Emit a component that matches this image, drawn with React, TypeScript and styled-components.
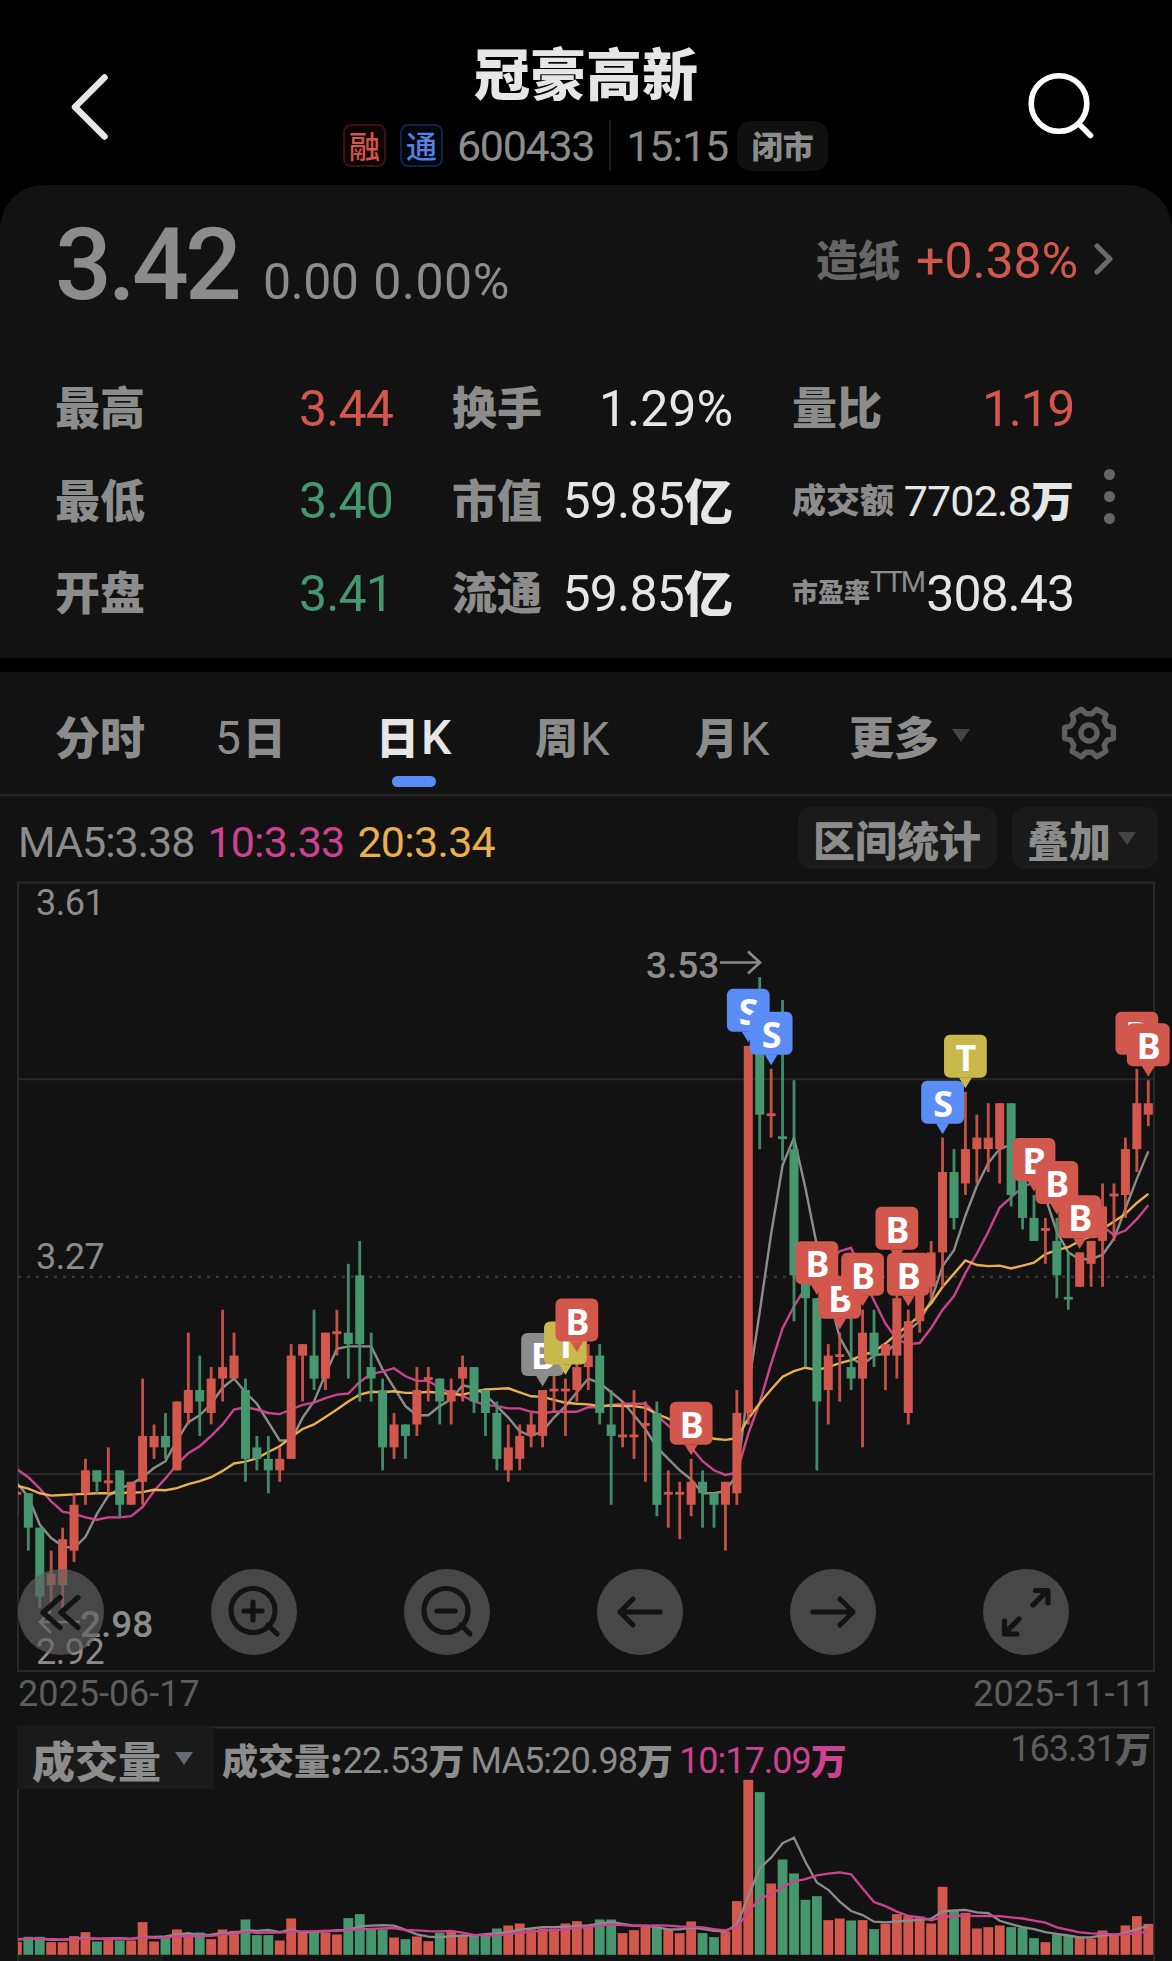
import React from 'react';
import styled, { createGlobalStyle } from 'styled-components';

const RED = '#d2574d';
const GREEN = '#469670';
const BLUE = '#5b8df6';
const GOLD = '#c9b84c';
const GREY = '#8c8c8c';
const DIM = '#5e5e5e';
const PINK = '#cc4490';
const AMBER = '#e9b04d';
const LIGHT = '#e6e6e6';
const PANEL = '#121212';
const CHIP = '#1a1a1a';
const LINE = '#282828';

const GlobalStyle = createGlobalStyle`
  * { box-sizing: border-box; }
  body { margin: 0; background: #000; }
`;

const Page = styled.div`
  width: 1172px;
  height: 1961px;
  overflow: hidden;
  display: flex;
  flex-direction: column;
  background: #000;
  font-family: Roboto, 'Noto Sans CJK SC', sans-serif;
  color: ${GREY};
`;

const Num = styled.span<{ $size?: number; $color?: string; $ls?: number; $weight?: number }>`
  font-family: Roboto, sans-serif;
  font-size: ${p => p.$size ?? 50}px;
  line-height: 1;
  padding-top: 0.06em;
  font-weight: ${p => p.$weight ?? 400};
  letter-spacing: ${p => p.$ls ?? 0}px;
  color: ${p => p.$color ?? GREY};
  white-space: nowrap;
`;

const Han = styled.span<{ $size?: number; $color?: string; $weight?: number }>`
  font-family: 'Noto Sans CJK SC', sans-serif;
  font-size: ${p => p.$size ?? 45}px;
  line-height: 1;
  font-weight: ${p => p.$weight ?? 900};
  color: ${p => p.$color ?? GREY};
  margin-top: -0.07em;
  white-space: nowrap;
`;

/* header */
const Header = styled.header`
  height: 185px;
  flex: none;
  display: grid;
  grid-template-columns: 180px 1fr 180px;
`;
const IconSlot = styled.div<{ $right?: boolean }>`
  display: flex;
  padding-top: 70px;
  padding-left: ${p => (p.$right ? 31 : 66)}px;
`;
const HeaderMid = styled.div`
  display: flex;
  flex-direction: column;
  align-items: center;
`;
const TitleLine = styled.div`
  height: 120px;
  padding-top: 26px;
  display: flex;
  align-items: center;
`;
const MetaLine = styled.div`
  width: 812px;
  height: 51px;
  padding-left: 163px;
  display: flex;
  align-items: center;
`;
const Tag = styled.span<{ $edge: string; $bg: string }>`
  width: 43px;
  height: 43px;
  margin-right: 14px;
  display: flex;
  align-items: center;
  justify-content: center;
  border: 2px solid ${p => p.$edge};
  border-radius: 8px;
  background: ${p => p.$bg};
`;
const Divider = styled.i`
  width: 2px;
  height: 51px;
  margin: 0 15px 0 15px;
  background: #1c1c1c;
`;
const StatusChip = styled.span`
  width: 91px;
  height: 50px;
  margin-left: 9px;
  display: flex;
  align-items: center;
  justify-content: center;
  border-radius: 14px;
  background: #101010;
`;

/* quote card */
const Quote = styled.section`
  height: 473px;
  flex: none;
  margin-bottom: 14px;
  border-radius: 44px 44px 0 0;
  background: ${PANEL};
`;
const PriceLine = styled.div`
  height: 176px;
  padding: 0 58px 0 55px;
  display: flex;
  justify-content: space-between;
`;
const PriceSet = styled.div`
  display: flex;
  align-items: baseline;
  padding-top: 24px;
`;
const Change = styled.span`
  display: flex;
  gap: 15px;
  margin-left: 25px;
`;
const Sector = styled.div`
  height: 50px;
  margin-top: 49px;
  display: flex;
  align-items: center;
  gap: 16px;
`;
const StatArea = styled.div`
  display: flex;
`;
const Stats = styled.div`
  width: 1075px;
  padding-left: 55px;
  display: grid;
  grid-template-columns: 338px 281px 282px;
  column-gap: 59px;
  grid-auto-rows: 92.5px;
`;
const Stat = styled.div`
  display: flex;
  align-items: center;
  justify-content: space-between;
`;
const Value = styled.span`
  display: flex;
  align-items: center;
`;
const Sup = styled(Num)`
  margin-top: -22px;
`;
const Dots = styled.div`
  width: 68px;
  padding-top: 108px;
  display: flex;
  flex-direction: column;
  align-items: center;
  gap: 11px;
  i { width: 11px; height: 11px; border-radius: 50%; background: #656565; }
`;

/* chart panel */
const Panel = styled.section`
  flex: 1;
  background: ${PANEL};
`;
const Tabs = styled.nav`
  height: 124px;
  padding: 0 55px 0 55px;
  border-bottom: 2px solid #242424;
  display: grid;
  grid-template-columns: 160px 161px 159px 160px 154px 160px 1fr;
`;
const Tab = styled.div`
  height: 122px;
  display: flex;
  flex-direction: column;
  padding-top: 38px;
`;
const TabText = styled.div`
  height: 54px;
  display: flex;
  align-items: center;
  gap: 2px;
`;
const TabMark = styled.i`
  width: 44px;
  height: 11px;
  margin: 12px 0 0 16px;
  border-radius: 6px;
  background: ${BLUE};
`;
const Caret = styled.i<{ $color?: string; $ml?: number }>`
  width: 0;
  height: 0;
  margin: 0 0 4px ${p => p.$ml ?? 8}px;
  border: 9px solid transparent;
  border-top: 13px solid ${p => p.$color ?? '#444'};
  border-bottom: 0;
`;
const GearSlot = styled.div`
  display: flex;
  justify-content: flex-end;
  padding-top: 33px;
`;
const Toolbar = styled.div`
  height: 86px;
  padding: 0 14px 0 18px;
  display: flex;
  justify-content: space-between;
`;
const Legend = styled.div`
  display: flex;
  align-items: center;
  gap: 13px;
  padding-top: 4px;
`;
const Actions = styled.div`
  display: flex;
  gap: 15px;
  padding-top: 11px;
`;
const Action = styled.div<{ $w: number }>`
  width: ${p => p.$w}px;
  height: 62px;
  padding: 4px 0 0 15px;
  display: flex;
  align-items: center;
  border-radius: 14px;
  background: ${CHIP};
`;
const ChartBox = styled.div<{ $h: number }>`
  position: relative;
  height: ${p => p.$h}px;
  margin: 0 17px;
  svg { display: block; overflow: visible; }
`;
const Controls = styled.div`
  position: absolute;
  left: 1px;
  right: 86px;
  top: 687px;
  display: flex;
  justify-content: space-between;
`;
const RoundButton = styled.button`
  width: 86px;
  height: 86px;
  padding: 0;
  border: 0;
  border-radius: 50%;
  background: rgba(97, 97, 97, 0.68);
`;
const Dates = styled.div`
  height: 56px;
  padding: 0 17px 13px 18px;
  display: flex;
  align-items: center;
  justify-content: space-between;
`;
const VolumeHead = styled.div`
  position: absolute;
  inset: 0 0 auto 0;
  height: 63px;
  display: flex;
  align-items: flex-start;
`;
const Picker = styled.div`
  width: 197px;
  height: 62px;
  padding: 5px 0 0 15px;
  display: flex;
  align-items: center;
  background: ${CHIP};
`;
const VolumeLegend = styled.div`
  height: 66px;
  flex: 1;
  padding-left: 8px;
  display: flex;
  align-items: center;
  gap: 6px;
`;
const VolumeMax = styled.div`
  height: 42px;
  padding-right: 4px;
  display: flex;
  align-items: center;
`;
const NextIndicator = styled.div`
  width: 145px;
  height: 6px;
  margin-left: 18px;
  background: ${CHIP};
`;

/* one row per day: up(1)/down(0), high, body top, body bottom, low — in cents above 2.98 — and volume */
type Candle = [number, number, number, number, number, number];
const DATA: Candle[] = [
  [1,10,10,10,8,39],[0,10,10,7,5,54],[0,7,7,1,0,54],[1,5,3,2,0,38],[1,7,6,2,0,38],
  [1,10,9,5,4,56],[1,13,12,10,9,68],[0,12,12,11,10,40],[1,14,11,11,10,44],[0,12,12,9,8,43],
  [1,11,11,9,9,43],[1,20,15,11,9,98],[1,16,15,14,13,40],[0,17,15,14,13,50],[1,18,18,12,12,76],
  [1,24,19,17,16,62],[0,22,19,18,15,67],[1,21,20,17,16,47],[1,26,21,20,18,76],[1,24,22,20,20,72],
  [0,20,19,13,11,106],[0,15,14,13,12,59],[0,15,13,12,10,59],[1,14,13,12,11,43],[1,23,22,13,13,109],
  [1,23,23,22,18,66],[0,26,22,20,19,66],[1,24,24,20,19,67],[1,26,24,24,22,61],[0,30,24,23,20,110],
  [0,32,29,23,18,122],[0,24,21,20,18,76],[0,20,19,14,12,76],[1,17,16,14,13,52],[0,16,16,15,13,47],
  [1,21,19,16,15,55],[1,21,20,20,18,41],[0,20,20,18,16,66],[1,20,19,18,16,72],[1,22,21,20,18,56],
  [0,21,21,18,17,58],[0,19,19,17,15,58],[0,18,17,13,12,79],[1,16,14,12,11,88],[1,16,15,13,12,94],
  [1,17,16,15,14,76],[1,19,19,15,14,79],[1,21,19,19,17,79],[1,20,19,19,15,94],[1,22,21,19,18,101],
  [1,23,22,21,19,87],[0,23,22,17,16,106],[0,19,16,15,9,106],[1,18,15,15,14,65],[1,19,15,15,13,74],
  [1,18,16,16,11,86],[0,18,17,9,8,82],[1,12,10,10,7,76],[1,11,10,10,6,65],[1,13,11,9,8,100],
  [0,12,11,10,7,65],[0,10,10,9,7,53],[1,11,11,9,5,70],[1,19,17,10,9,161],[1,49,49,17,16,525],
  [0,55,50,43,40,488],[1,47,43,43,41,214],[0,53,41,41,39,286],[0,46,40,29,25,244],[0,29,29,27,21,165],
  [0,27,27,18,12,176],[1,23,22,19,16,104],[1,24,22,22,18,109],[0,26,21,20,19,103],[1,26,24,20,14,104],
  [0,26,24,22,21,77],[1,23,23,22,19,93],[1,30,27,22,20,122],[1,26,25,17,16,117],[1,28,28,25,24,115],
  [1,32,31,28,27,94],[1,41,38,31,28,204],[0,40,38,34,33,134],[1,45,40,37,36,126],[1,43,41,40,37,79],
  [1,44,41,40,38,83],[1,44,44,40,37,88],[0,44,44,36,35,83],[0,38,38,34,33,82],[0,36,34,32,32,50],
  [1,34,33,33,30,38],[0,34,32,29,27,61],[0,31,27,27,26,58],[1,31,31,28,28,54],[1,32,32,30,28,48],
  [1,37,35,32,28,73],[1,37,36,36,32,63],[1,41,40,36,34,88],[1,47,44,40,38,116],[1,46,44,43,42,93],
];

const UNIT = 11.472;
const cx = (i: number) => 16.9 + i * 11.428;
const py = (k: number) => 1608 - k * UNIT;
const vy = (v: number) => 1954.8 - v / 3;
const closes = DATA.map(d => (d[0] ? d[2] : d[3]));
const volumes = DATA.map(d => d[5]);

/* moving average; `lead` holds the values that depend on days before the window */
const average = (series: number[], n: number, lead: number[]) =>
  series.map((_, i) =>
    i < n - 1 ? lead[i] : series.slice(i - n + 1, i + 1).reduce((a, b) => a + b, 0) / n,
  );
const ma5 = average(closes, 5, [10.9, 9.7, 7.25, 6.1]);
const ma10 = average(closes, 10, [12.1, 11.4, 10.4, 9.3, 8.4, 8.2, 7.9, 7.7, 7.9]);
const ma20 = average(closes, 20, [
  10.65, 10.4, 10, 9.8, 9.85, 9.9, 9.95, 10, 10, 10.05, 10.05, 10.1, 10.3, 10.27, 10.45, 10.8, 11.05, 11.4, 11.95,
]);
const vma5 = average(volumes, 5, [45, 48, 48, 45]);
const vma10 = average(volumes, 10, [48, 48, 48, 47, 46, 47, 48, 49, 48]);
const path = (values: number[], y: (n: number) => number) =>
  values.map((v, i) => `${i ? 'L' : 'M'}${cx(i).toFixed(1)} ${y(v).toFixed(1)}`).join('');

const MARKS: [number, string, string][] = [
  [46, 'B', GREY], [48, 'T', GOLD], [49, 'B', RED], [59, 'B', RED], [64, 'S', BLUE], [66, 'S', BLUE],
  [70, 'B', RED], [72, 'B', RED], [74, 'B', RED], [77, 'B', RED], [78, 'B', RED], [81, 'S', BLUE],
  [83, 'T', GOLD], [89, 'B', RED], [91, 'B', RED], [93, 'B', RED], [98, 'B', RED], [99, 'B', RED],
];

const AxisText = styled.text`
  font: 400 36px Roboto, sans-serif;
  letter-spacing: -0.5px;
  fill: ${GREY};
`;
const ExtremeText = styled.text`
  font: 500 37px Roboto, sans-serif;
  fill: ${GREY};
`;
const MarkText = styled.text`
  font: 700 36px 'Noto Sans', sans-serif;
  fill: #fff;
  text-anchor: middle;
`;

function PriceChart() {
  return (
    <svg width="1138" height="789" viewBox="17 882 1138 789">
      <defs>
        <clipPath id="plot"><rect x="18" y="882" width="1137" height="790" /></clipPath>
      </defs>
      <g fill="none" stroke={LINE} strokeWidth="2">
        <rect x="18" y="882.5" width="1136" height="788.5" />
        <path d="M18 1079.3H1154M18 1474H1154" />
        <path d="M18 1276.7H1154" strokeDasharray="3 6" stroke="#3c3c3c" />
      </g>
      <g clipPath="url(#plot)">
        <g fill="none" strokeWidth="2.4">
          <path d={path(ma5, py)} stroke={GREY} />
          <path d={path(ma10, py)} stroke={PINK} />
          <path d={path(ma20, py)} stroke={AMBER} />
        </g>
        {DATA.map(([up, hi, top, bot, lo], i) => (
          <g key={i} fill={up ? RED : GREEN}>
            <rect x={cx(i) - 1.4} y={py(hi)} width="2.8" height={(hi - lo) * UNIT} opacity="0.92" />
            <rect
              x={cx(i) - 4.5}
              y={top === bot ? py(top) - 1.4 : py(top)}
              width="9"
              height={top === bot ? 2.8 : (top - bot) * UNIT}
            />
          </g>
        ))}
      </g>
      <AxisText x="36" y="915">3.61</AxisText>
      <AxisText x="36" y="1269">3.27</AxisText>
      <AxisText x="36" y="1664">2.92</AxisText>
      <ExtremeText x="646" y="978">3.53</ExtremeText>
      <ExtremeText x="80" y="1637">2.98</ExtremeText>
      <g fill="none" stroke={GREY} strokeWidth="2.6">
        <path d="M720 962.5H760M748 951.5L760 962.5L748 973.5" />
        <path d="M80 1622H40M51 1611L40 1622L51 1633" />
      </g>
      {MARKS.map(([i, letter, color]) => {
        const x = cx(i);
        const tip = py(DATA[i][1]) - 3.5;
        return (
          <g key={i}>
            <rect x={x - 21.4} y={tip - 53.5} width="42.8" height="43" rx="6" fill={color} />
            <path d={`M${x - 6.5} ${tip - 10.7}h13L${x} ${tip}z`} fill={color} />
            <MarkText x={x + 0.5} y={tip - 17.5}>{letter}</MarkText>
          </g>
        );
      })}
    </svg>
  );
}

function VolumeChart() {
  return (
    <svg width="1138" height="234" viewBox="17 1727 1138 234">
      <defs>
        <clipPath id="vol"><rect x="18" y="1727" width="1137" height="229" /></clipPath>
      </defs>
      <path d="M18 1961V1727.5H1154V1961" fill="none" stroke={LINE} strokeWidth="2" />
      <g clipPath="url(#vol)">
        {DATA.map((d, i) => (
          <rect key={i} x={cx(i) - 4.9} y={vy(d[5])} width="9.8" height={d[5] / 3} fill={d[0] ? RED : GREEN} />
        ))}
        <path d={path(vma5, vy)} fill="none" stroke={GREY} strokeWidth="2.3" />
        <path d={path(vma10, vy)} fill="none" stroke={PINK} strokeWidth="2.3" />
      </g>
    </svg>
  );
}

const CONTROL_PATHS = [
  'M42 28.5L25 43.5L42 58.5M60 28.5L43 43.5L60 58.5',
  'M66 65L57 56M42 33V51M33 42H51M64 41.500a22 22 0 1 1-44 0a22 22 0 1 1 44 0',
  'M66 65L57 56M33 42H51M64 41.500a22 22 0 1 1-44 0a22 22 0 1 1 44 0',
  'M63 43H23M36 30L23 43L36 56',
  'M23 43H63M50 30L63 43L50 56',
  'M50 36L64 22M52.500 21.500H65V34M36 50L22 64M21.500 52V65H34',
];

function Gear() {
  const pts: string[] = [];
  for (let i = 0; i < 6; i += 1) {
    const a = (i * 60 - 90) * (Math.PI / 180);
    const at = (r: number, d: number) =>
      `${(28 + r * Math.cos(a + d)).toFixed(1)} ${(28 + r * Math.sin(a + d)).toFixed(1)}`;
    pts.push(`${i ? 'L' : 'M'}${at(19.5, -0.15)}L${at(19.5, 0.15)}L${at(25, 0.31)}L${at(25, 0.74)}`);
  }
  return (
    <svg width="56" height="56" viewBox="0 0 56 56" fill="none" stroke={DIM} strokeWidth="5.4" strokeLinejoin="round">
      <path d={`${pts.join('')}Z`} />
      <circle cx="28" cy="28" r="8" />
    </svg>
  );
}

export default function App() {
  return (
    <Page>
      <GlobalStyle />
      <Header>
        <IconSlot>
          <svg width="48" height="74" viewBox="66 70 48 74" fill="none" stroke={LIGHT} strokeWidth="6.5" strokeLinecap="round" strokeLinejoin="round">
            <path d="M104.500 77.500L75 107L104.500 136.500" />
          </svg>
        </IconSlot>
        <HeaderMid>
          <TitleLine><Han $size={56} $color={LIGHT}>冠豪高新</Han></TitleLine>
          <MetaLine>
            <Tag $edge="#351412" $bg="#0f0403"><Han $size={31} $weight={500} $color={RED}>融</Han></Tag>
            <Tag $edge="#132240" $bg="#030712"><Han $size={31} $weight={500} $color="#5580df">通</Han></Tag>
            <Num $size={43} $ls={-1.3}>600433</Num>
            <Divider />
            <Num $size={43} $ls={-1}>15:15</Num>
            <StatusChip><Han $size={31}>闭市</Han></StatusChip>
          </MetaLine>
        </HeaderMid>
        <IconSlot $right>
          <svg width="76" height="74" viewBox="1023 70 76 74" fill="none" stroke="#fff" strokeWidth="5.6" strokeLinecap="round">
            <circle cx="1059" cy="103.500" r="27.800" />
            <path d="M1079 124L1090.500 135.500" />
          </svg>
        </IconSlot>
      </Header>

      <Quote>
        <PriceLine>
          <PriceSet>
            <Num $size={100} $ls={-3.8} $weight={500}>3.42</Num>
            <Change>
              <Num $ls={-0.6}>0.00</Num>
              <Num $ls={0.5}>0.00%</Num>
            </Change>
          </PriceSet>
          <Sector>
            <Han $size={42} $color="#666">造纸</Han>
            <Num $color={RED} $ls={-0.1}>+0.38%</Num>
            <svg width="20" height="36" viewBox="0 0 20 36" fill="none" stroke="#6a6a6a" strokeWidth="5" strokeLinecap="round" strokeLinejoin="round">
              <path d="M3 5L16 18L3 31" />
            </svg>
          </Sector>
        </PriceLine>
        <StatArea>
          <Stats>
            <Stat><Han>最高</Han><Num $color={RED} $ls={-0.9}>3.44</Num></Stat>
            <Stat><Han>换手</Han><Num $color={LIGHT}>1.29%</Num></Stat>
            <Stat><Han>量比</Han><Num $color={RED} $ls={-1.4}>1.19</Num></Stat>
            <Stat><Han>最低</Han><Num $color={GREEN} $ls={-0.9}>3.40</Num></Stat>
            <Stat><Han>市值</Han><Value><Num $color={LIGHT} $ls={-0.8}>59.85</Num><Han $size={49} $color={LIGHT}>亿</Han></Value></Stat>
            <Stat><Han $size={34}>成交额</Han><Value><Num $size={43} $ls={-0.8} $color={LIGHT}>7702.8</Num><Han $size={43} $color={LIGHT}>万</Han></Value></Stat>
            <Stat><Han>开盘</Han><Num $color={GREEN} $ls={-0.9}>3.41</Num></Stat>
            <Stat><Han>流通</Han><Value><Num $color={LIGHT} $ls={-0.8}>59.85</Num><Han $size={49} $color={LIGHT}>亿</Han></Value></Stat>
            <Stat>
              <Value><Han $size={26}>市盈率</Han><Sup $size={29} $ls={-2}>TTM</Sup></Value>
              <Num $color={LIGHT} $ls={-1}>308.43</Num>
            </Stat>
          </Stats>
          <Dots><i /><i /><i /></Dots>
        </StatArea>
      </Quote>

      <Panel>
        <Tabs>
          <Tab><TabText><Han>分时</Han></TabText></Tab>
          <Tab><TabText><Num $size={46}>5</Num><Han $size={43}>日</Han></TabText></Tab>
          <Tab>
            <TabText><Han $size={43} $color={LIGHT}>日</Han><Num $size={48} $weight={500} $color={LIGHT}>K</Num></TabText>
            <TabMark />
          </Tab>
          <Tab><TabText><Han $size={43}>周</Han><Num $size={47}>K</Num></TabText></Tab>
          <Tab><TabText><Han $size={43}>月</Han><Num $size={47}>K</Num></TabText></Tab>
          <Tab><TabText><Han>更多</Han><Caret $ml={11} /></TabText></Tab>
          <GearSlot><Gear /></GearSlot>
        </Tabs>
        <Toolbar>
          <Legend>
            <Num $size={43} $ls={-1}>MA5:3.38</Num>
            <Num $size={43} $ls={-0.8} $color={PINK}>10:3.33</Num>
            <Num $size={43} $ls={-0.7} $color={AMBER}>20:3.34</Num>
          </Legend>
          <Actions>
            <Action $w={199}><Han $size={42}>区间统计</Han></Action>
            <Action $w={146}><Han $size={42}>叠加</Han><Caret $ml={7} /></Action>
          </Actions>
        </Toolbar>
        <ChartBox $h={789}>
          <PriceChart />
          <Controls>
            {CONTROL_PATHS.map(d => (
              <RoundButton key={d}>
                <svg width="86" height="86" viewBox="0 0 86 86" fill="none" stroke="#131313" strokeWidth="5.2" strokeLinecap="round" strokeLinejoin="round">
                  <path d={d} />
                </svg>
              </RoundButton>
            ))}
          </Controls>
        </ChartBox>
        <Dates>
          <Num $size={36} $color={DIM}>2025-06-17</Num>
          <Num $size={36} $color={DIM}>2025-11-11</Num>
        </Dates>
        <ChartBox $h={228}>
          <VolumeHead>
            <Picker><Han $size={43}>成交量</Han><Caret $ml={14} $color="#666b75" /></Picker>
            <VolumeLegend>
              <Value><Han $size={36}>成交量:</Han><Num $size={36} $ls={-0.9}>22.53</Num><Han $size={36}>万</Han></Value>
              <Value><Num $size={36} $ls={-0.9}>MA5:20.98</Num><Han $size={36}>万</Han></Value>
              <Value><Num $size={36} $ls={-1} $color={PINK}>10:17.09</Num><Han $size={36} $color={PINK}>万</Han></Value>
            </VolumeLegend>
            <VolumeMax><Num $size={36} $ls={-1} $color={DIM}>163.31</Num><Han $size={36} $color={DIM}>万</Han></VolumeMax>
          </VolumeHead>
          <VolumeChart />
        </ChartBox>
        <NextIndicator />
      </Panel>
    </Page>
  );
}
